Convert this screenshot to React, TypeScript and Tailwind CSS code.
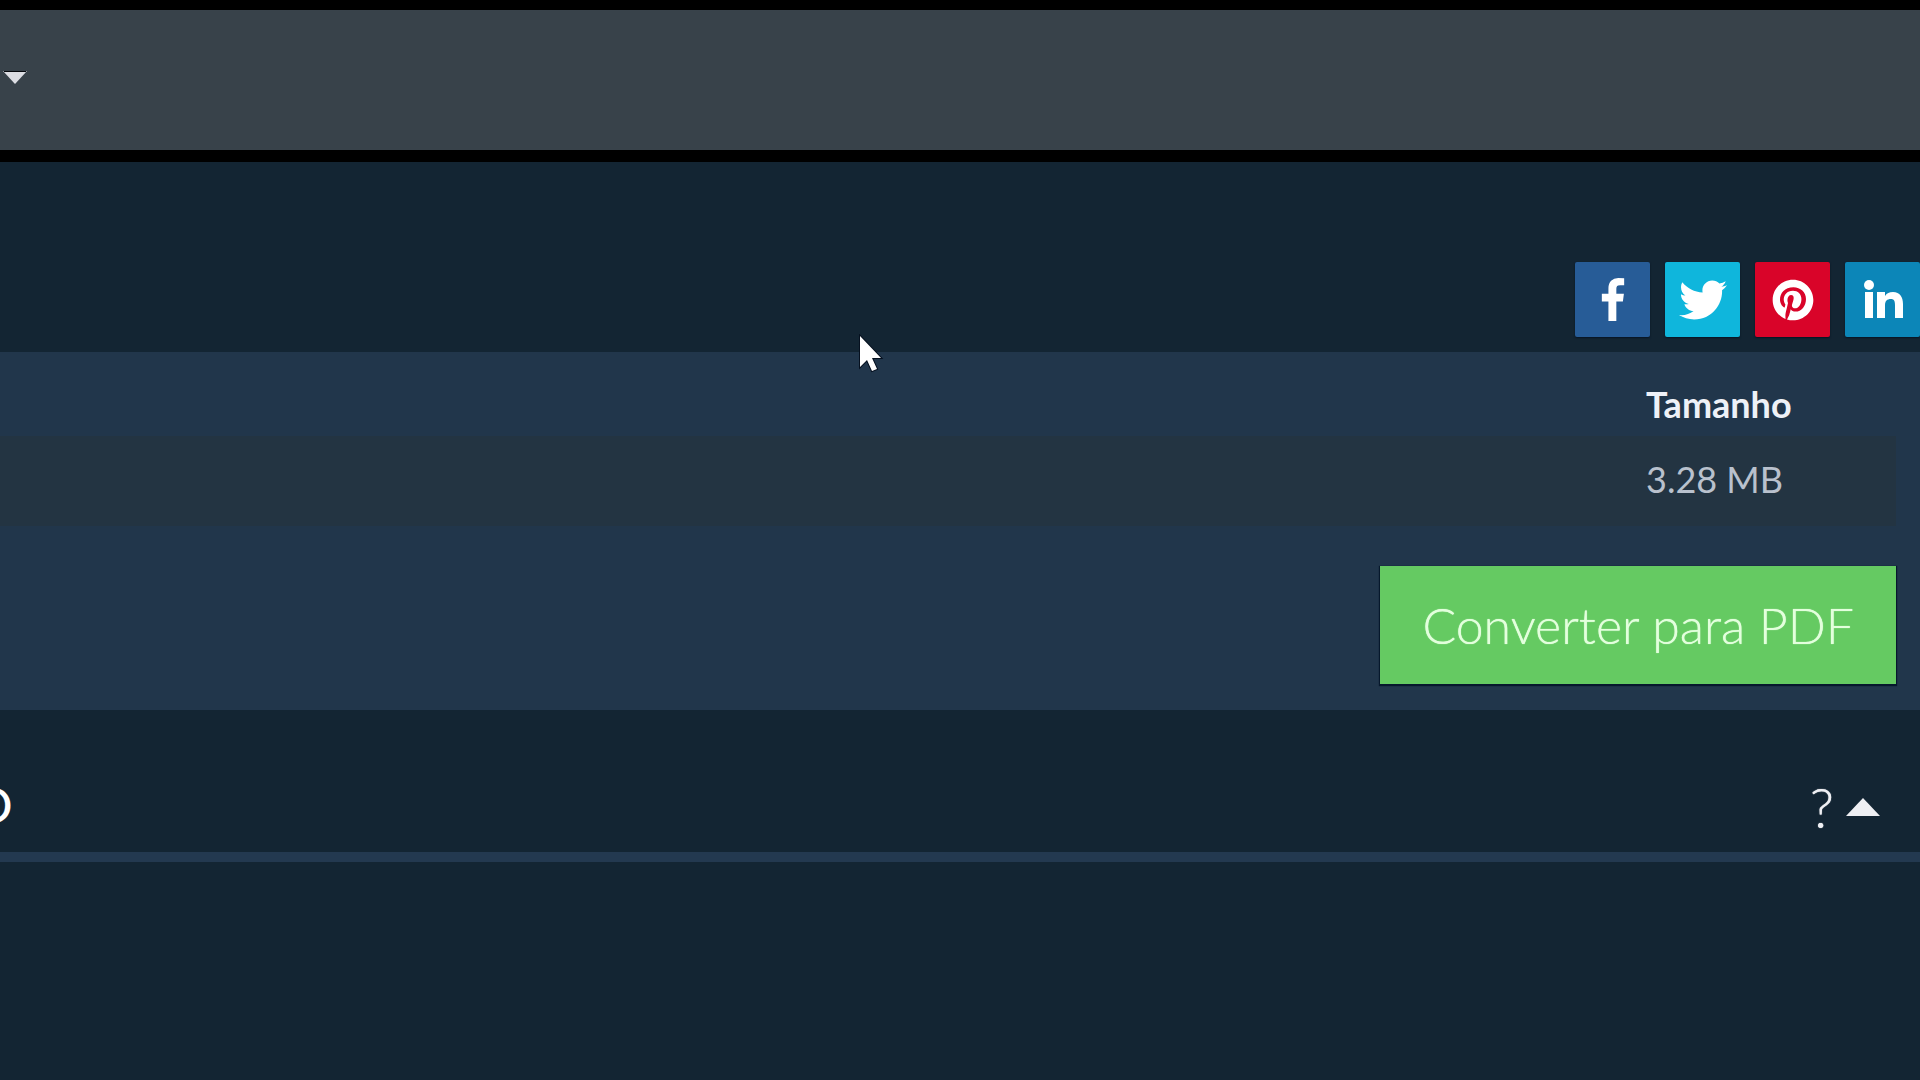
import { useState } from 'react';
import { FaPinterest, FaTwitter } from 'react-icons/fa';

interface UploadedFile {
  size: string;
}

const files: UploadedFile[] = [{ size: '3.28 MB' }];

const shareLinks = [
  {
    name: 'Facebook',
    color: 'bg-[#275c97]',
    icon: (
      <svg width="24" height="43" viewBox="95 0 864 1664" fill="currentColor" aria-hidden="true">
        <path d="M959 12v264h-157q-86 0-116 36t-30 108v189h293l-39 296h-254v759h-306v-759h-255v-296h255v-218q0-186 104-288.500t277-102.500q147 0 228 12z" />
      </svg>
    ),
  },
  { name: 'Twitter', color: 'bg-[#0fb6dc]', icon: <FaTwitter size={48} /> },
  { name: 'Pinterest', color: 'bg-[#d90429]', icon: <FaPinterest size={42} /> },
  {
    name: 'LinkedIn',
    color: 'bg-[#0c86b8]',
    icon: (
      <svg width="40" height="40" viewBox="0 0 40 40" fill="currentColor" aria-hidden="true">
        <circle cx="6" cy="5" r="5" />
        <path d="M2 12h8v26H2z" />
        <path d="M14 12h8v4c2-3 4-4 8-4 7 0 10 5 10 12v14h-8V25c0-4-1-6-4-6-4 0-6 2-6 6v13h-8z" />
      </svg>
    ),
  },
];

function NavBar() {
  return (
    <header className="border-t-10 border-b-12 border-black bg-[#38424a]">
      <nav className="flex h-[140px] items-start px-[3px] pt-[61px]">
        <button type="button" aria-label="Menu" className="text-[#dcdde3]">
          <svg width="24" height="14" viewBox="0 0 24 14" fill="currentColor" aria-hidden="true">
            <path d="M0 0h24L12 13z" />
            <path d="M1 0h22" stroke="#05070c" strokeWidth="2" />
          </svg>
        </button>
      </nav>
    </header>
  );
}

function ShareBar() {
  return (
    <div className="flex justify-end gap-[15px] pt-[100px] pb-[15px]">
      {shareLinks.map((link) => (
        <a
          key={link.name}
          href="#"
          aria-label={link.name}
          className={`flex size-[75px] items-center justify-center rounded-xs text-white shadow-[0_1px_2px_#061422] ${link.color}`}
        >
          {link.icon}
        </a>
      ))}
    </div>
  );
}

function FilePanel() {
  return (
    <section className="bg-[#21364b] pr-6 pb-[26px]">
      <table className="w-full table-fixed text-left text-4xl">
        <thead>
          <tr className="h-[84px]">
            <th aria-hidden="true" />
            <th scope="col" className="w-[250px] pt-5 font-bold text-[#eef1f7]">
              Tamanho
            </th>
          </tr>
        </thead>
        <tbody>
          {files.map((file) => (
            <tr key={file.size} className="h-[90px] bg-[#233442]">
              <td />
              <td className="pb-1 text-[#b9c1cd]">{file.size}</td>
            </tr>
          ))}
        </tbody>
      </table>
      <div className="flex justify-end pt-10">
        <button
          type="button"
          className="h-[118px] bg-[#65ca62] px-[42px] text-[50px] font-light text-[#e3ffdd] shadow-[0_1px_1px_1px_#06182c] text-shadow-[0_0_1px_#e3ffdd]"
        >
          Converter para PDF
        </button>
      </div>
    </section>
  );
}

function OptionsSection() {
  const [open, setOpen] = useState(false);

  return (
    <section className="flex h-[152px] items-center justify-between border-b-10 border-[#233950] pt-12 pr-10">
      <h2 className="-ml-[26px] text-5xl font-medium text-white">O</h2>
      <button
        type="button"
        aria-expanded={open}
        onClick={() => setOpen(!open)}
        className="flex items-center gap-3 pt-1 text-[56px] leading-none font-light text-[#eeeff3] text-shadow-[0_0_1px_#eeeff3]"
      >
        ?
        <svg width="34" height="18" viewBox="0 0 34 18" fill="currentColor" aria-hidden="true">
          <path d="M17 0l17 18H0z" />
        </svg>
      </button>
    </section>
  );
}

function Pointer() {
  return (
    <svg
      className="pointer-events-none absolute top-[334px] left-[858px]"
      width="26"
      height="40"
      viewBox="0 0 26 40"
      aria-hidden="true"
    >
      <path
        d="M2 2v31l7-7 5 11 5-2-5-11h9z"
        fill="#fff"
        stroke="#05101f"
        strokeWidth="2"
        paintOrder="stroke"
      />
    </svg>
  );
}

export default function App() {
  return (
    <div className="relative min-h-screen overflow-hidden bg-[#132533] font-[Lato,sans-serif]">
      <NavBar />
      <main>
        <ShareBar />
        <FilePanel />
        <OptionsSection />
      </main>
      <Pointer />
    </div>
  );
}
